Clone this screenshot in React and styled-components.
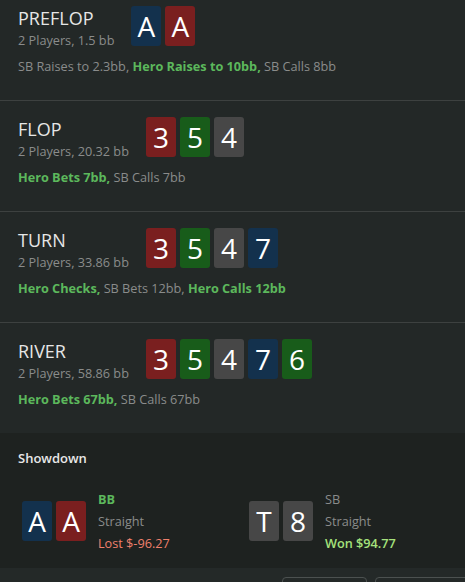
import React from 'react';
import styled, { createGlobalStyle } from 'styled-components';

const GlobalStyle = createGlobalStyle`
  html, body {
    margin: 0;
    padding: 0;
    background: #232827;
    overflow: hidden;
  }
  body {
    font-family: "Open Sans", "Noto Sans", sans-serif;
    color: #e4e4e4;
  }
`;

const CARD_COLORS = {
  h: '#7a1f1f',
  c: '#185c1a',
  s: '#474747',
  d: '#13314d',
};

const streets = [
  {
    name: 'PREFLOP',
    info: '2 Players, 1.5 bb',
    cards: [['A', 'd'], ['A', 'h']],
    actions: [
      { text: 'SB Raises to 2.3bb' },
      { text: 'Hero Raises to 10bb', hero: true },
      { text: 'SB Calls 8bb' },
    ],
  },
  {
    name: 'FLOP',
    info: '2 Players, 20.32 bb',
    cards: [['3', 'h'], ['5', 'c'], ['4', 's']],
    actions: [
      { text: 'Hero Bets 7bb', hero: true },
      { text: 'SB Calls 7bb' },
    ],
  },
  {
    name: 'TURN',
    info: '2 Players, 33.86 bb',
    cards: [['3', 'h'], ['5', 'c'], ['4', 's'], ['7', 'd']],
    actions: [
      { text: 'Hero Checks', hero: true },
      { text: 'SB Bets 12bb' },
      { text: 'Hero Calls 12bb', hero: true },
    ],
  },
  {
    name: 'RIVER',
    info: '2 Players, 58.86 bb',
    cards: [['3', 'h'], ['5', 'c'], ['4', 's'], ['7', 'd'], ['6', 'c']],
    actions: [
      { text: 'Hero Bets 67bb', hero: true },
      { text: 'SB Calls 67bb' },
    ],
  },
];

const players = [
  { pos: 'BB', hero: true, hand: 'Straight', result: 'Lost $-96.27', won: false, cards: [['A', 'd'], ['A', 'h']] },
  { pos: 'SB', hero: false, hand: 'Straight', result: 'Won $94.77', won: true, cards: [['T', 's'], ['8', 's']] },
];

const App = () => {
  return (
    <Page>
      <GlobalStyle />
      <StreetList>
        {streets.map((street) => (
          <Street key={street.name}>
            <StreetHead>
              <StreetInfo>
                <StreetName>{street.name}</StreetName>
                <StreetMeta>{street.info}</StreetMeta>
              </StreetInfo>
              <Cards>
                {street.cards.map(([rank, suit], i) => (
                  <Card key={i} suit={suit}>{rank}</Card>
                ))}
              </Cards>
            </StreetHead>
            <Actions>
              {street.actions.map((a, i) => (
                <Action key={i} hero={a.hero ? 1 : 0}>
                  {a.text}{i < street.actions.length - 1 ? ', ' : ''}
                </Action>
              ))}
            </Actions>
          </Street>
        ))}
      </StreetList>

      <Showdown>
        <ShowdownTitle>Showdown</ShowdownTitle>
        <Players>
          {players.map((p) => (
            <Player key={p.pos}>
              <Cards>
                {p.cards.map(([rank, suit], i) => (
                  <Card key={i} suit={suit}>{rank}</Card>
                ))}
              </Cards>
              <PlayerText>
                <Position hero={p.hero ? 1 : 0}>{p.pos}</Position>
                <HandName>{p.hand}</HandName>
                <Result won={p.won ? 1 : 0}>{p.result}</Result>
              </PlayerText>
            </Player>
          ))}
        </Players>
      </Showdown>

      {/* only the top edge of the footer buttons is in view */}
      <Footer>
        <FooterButton />
        <FooterButton wide={1} />
      </Footer>
    </Page>
  );
};

const Page = styled.div`
  width: 465px;
  height: 582px;
  overflow: hidden;
  background: #232827;
`;

const StreetList = styled.div`
  margin-top: -11px;
`;

const Street = styled.section`
  border-top: 1px solid #3d4140;
  padding: 16px 18px 24px;
`;

const StreetHead = styled.div`
  display: flex;
  align-items: flex-start;
  gap: 17px;
`;

const StreetInfo = styled.div`
  display: flex;
  flex-direction: column;
`;

const StreetName = styled.div`
  font-size: 18px;
  line-height: 24px;
  color: #e6e6e6;
`;

const StreetMeta = styled.div`
  font-size: 12.7px;
  line-height: 20px;
  color: #8a8c8b;
  white-space: nowrap;
`;

const Cards = styled.div`
  display: flex;
  gap: 4px;
`;

const Card = styled.div`
  width: 30px;
  height: 40px;
  border-radius: 3px;
  background: ${(props) => CARD_COLORS[props.suit]};
  color: #ffffff;
  font-size: 28px;
  line-height: 40px;
  text-align: center;
`;

const Actions = styled.div`
  margin-top: 6px;
  font-size: 12.7px;
  line-height: 20px;
  white-space: nowrap;
`;

const Action = styled.span`
  color: ${(props) => (props.hero ? '#5cb85c' : '#8a8c8b')};
  font-weight: ${(props) => (props.hero ? 700 : 400)};
`;

const Showdown = styled.section`
  background: #1e2220;
  padding: 15px 18px 14px 22px;
`;

const ShowdownTitle = styled.div`
  margin-left: -4px;
  font-size: 13px;
  line-height: 20px;
  font-weight: 600;
  color: #e8e8e8;
`;

const Players = styled.div`
  display: grid;
  grid-template-columns: 227px 1fr;
  margin-top: 20px;
`;

const Player = styled.div`
  display: flex;
  align-items: center;
  gap: 12px;
`;

const PlayerText = styled.div`
  display: flex;
  flex-direction: column;
  font-size: 12.7px;
  line-height: 22px;
`;

const Position = styled.div`
  color: ${(props) => (props.hero ? '#5cb85c' : '#8a8c8b')};
  font-weight: ${(props) => (props.hero ? 700 : 400)};
`;

const HandName = styled.div`
  color: #8a8c8b;
`;

const Result = styled.div`
  color: ${(props) => (props.won ? '#a6e27c' : '#f0806c')};
  font-weight: ${(props) => (props.won ? 600 : 400)};
`;

const Footer = styled.div`
  display: flex;
  gap: 8px;
  padding: 9px 0 0 282px;
  background: #242928;
`;

const FooterButton = styled.button`
  flex: none;
  width: ${(props) => (props.wide ? '110px' : '85px')};
  height: 32px;
  border: 1px solid #4c5150;
  border-radius: 4px;
  background: transparent;
`;

export default App;
